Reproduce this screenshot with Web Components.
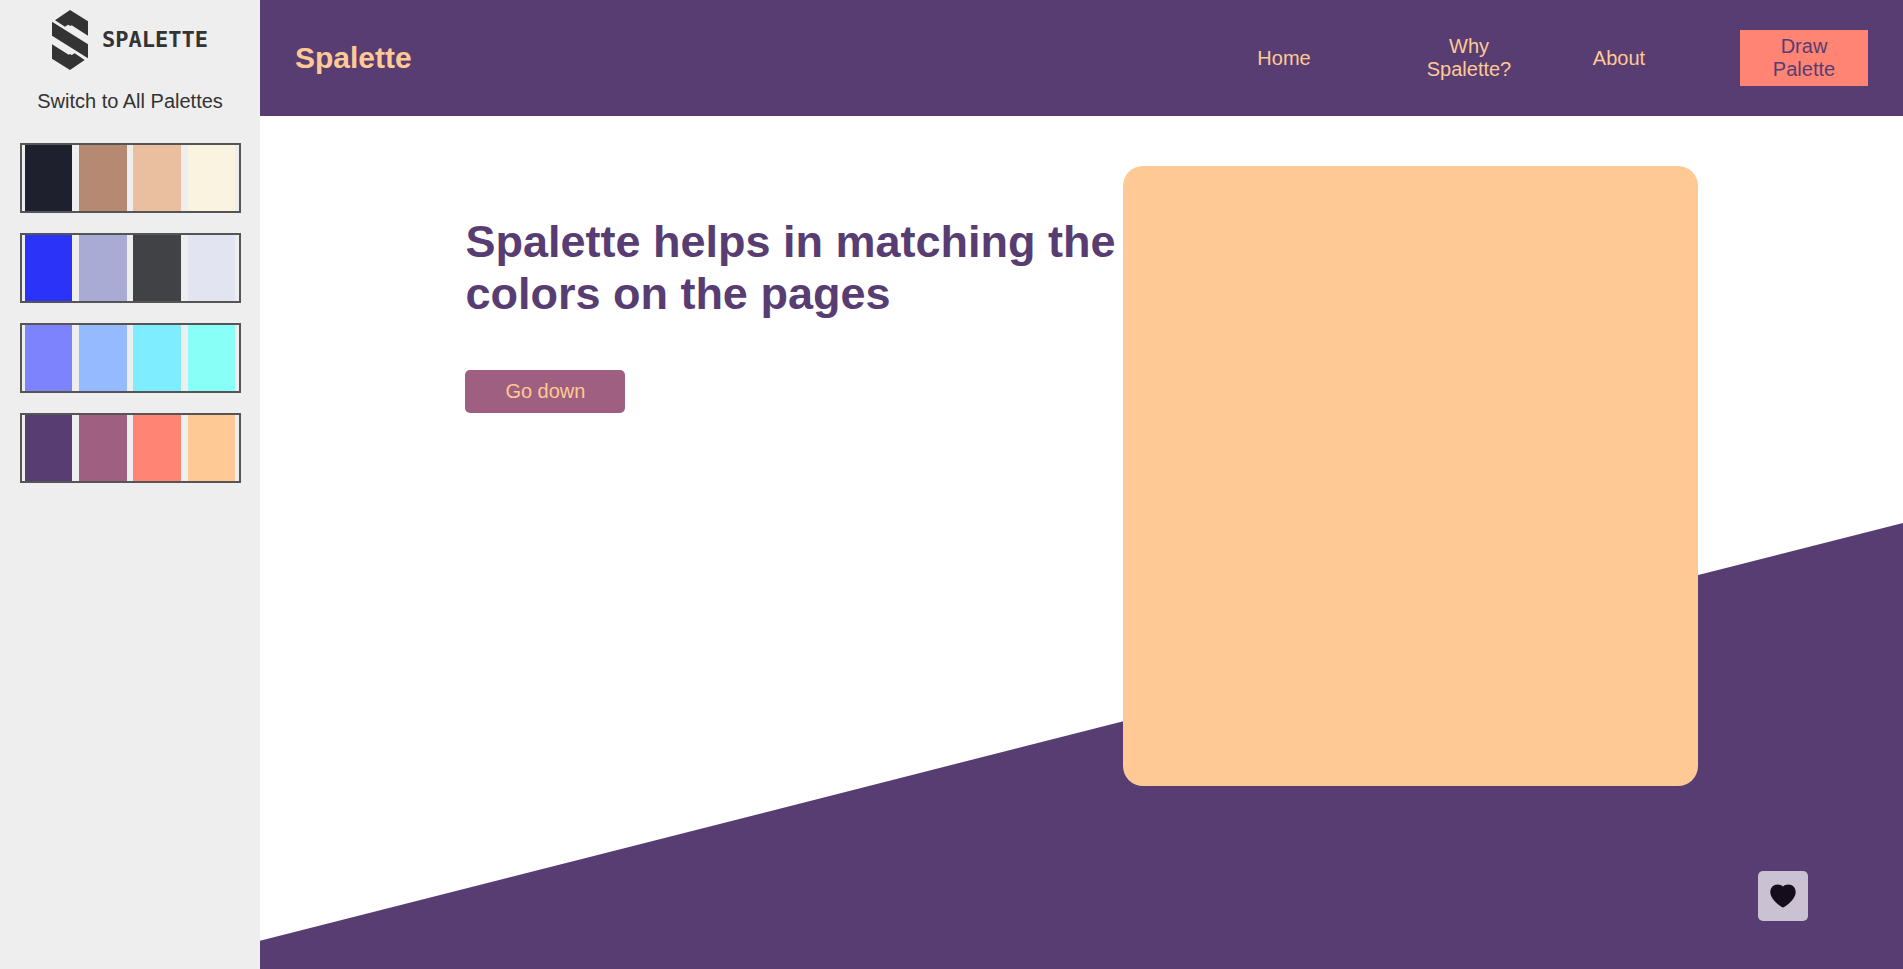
<!DOCTYPE html>
<html lang="en">
<head>
<meta charset="UTF-8">
<meta name="viewport" content="width=device-width, initial-scale=1.0">
<title>Spalette</title>
<style>
  *{
    box-sizing:border-box;
  }
  :root{
    --first:#583d72;
    --second:#9f5f80;
    --third:#ff8474;
    --fourth:#ffc996;
  }
  body{
    margin:0;
    min-height:100vh;
    display:flex;
    font-family:"Liberation Sans",Arial,sans-serif;
    font-size:20px;
  }
  main{
    flex:1;
    display:flex;
    flex-direction:column;
  }
</style>
</head>
<body>
  <palette-sidebar>
    <spalette-logo slot="logo">SPALETTE</spalette-logo>
    <span slot="switch">Switch to All Palettes</span>
    <color-palette colors="#1e212d,#b68973,#eabf9f,#faf3e0"></color-palette>
    <color-palette colors="#2b33f9,#a9abd5,#414246,#e2e5f1"></color-palette>
    <color-palette colors="#7c83fd,#96baff,#7dedff,#88fff7"></color-palette>
    <color-palette colors="#583d72,#9f5f80,#ff8474,#ffc996"></color-palette>
  </palette-sidebar>
  <main>
    <page-header>Spalette</page-header>
    <page-hero>
      <span slot="title">Spalette helps in matching the colors on the pages</span>
      <span slot="action">Go down</span>
    </page-hero>
  </main>
  <favorite-button></favorite-button>

<script>
class SpaletteElement extends HTMLElement{
    constructor(){
        super();
        this.attachShadow({mode:'open'});
    }

    connectedCallback(){
        this.render();
    }

    render(){
        const template=document.createElement('template');
        template.innerHTML=`
          <style>
          *{
            box-sizing:border-box;
          }
          button{
            border:0;
            padding:0;
            font:inherit;
            color:inherit;
            background:none;
            cursor:pointer;
          }
          ${this.getStyles()}
          </style>
          ${this.getTemplate()}
        `;
        this.shadowRoot.replaceChildren(template.content.cloneNode(true));
    }
}

class SpaletteLogo extends SpaletteElement{
    getTemplate(){
        return `
          <svg viewBox="156 30 108 180" width="36" height="60" aria-hidden="true">
            <path d="M210 30 264 64V107L215 76 211 78 204 74 195 80 165 61Z"/>
            <path d="M156 65 264 133V175L156 107Z"/>
            <path d="M156 133 206 164 209 162 215 165 224 160 254 180 210 210 156 176Z"/>
          </svg>
          <slot></slot>
        `;
    }
    getStyles(){
        return `
          :host{
            display:flex;
            align-items:center;
            justify-content:center;
            gap:14px;
            color:#333;
            font-family:"DejaVu Sans Mono",monospace;
            font-size:22px;
            font-weight:bold;
            line-height:26px;
          }
          svg{
            fill:currentColor;
          }
        `;
    }
}

class ColorPalette extends SpaletteElement{
    getTemplate(){
        const colors=this.getAttribute('colors').split(',');
        return `
          <button type="button" aria-label="Use palette ${colors.join(' ')}">
            ${colors.map(color=>`<span style="background:${color}"></span>`).join('')}
          </button>
        `;
    }
    getStyles(){
        return `
          :host{
            display:block;
          }
          button{
            display:flex;
            justify-content:space-around;
            width:100%;
            height:70px;
            border:2px solid #555;
          }
          span{
            width:22%;
            height:100%;
          }
        `;
    }
}

class PaletteSidebar extends SpaletteElement{
    getTemplate(){
        return `
          <slot name="logo"></slot>
          <button type="button"><slot name="switch"></slot></button>
          <div><slot></slot></div>
        `;
    }
    getStyles(){
        return `
          :host{
            display:flex;
            flex-direction:column;
            align-items:center;
            flex:none;
            width:260px;
            padding:10px 0;
            background:#eee;
            color:#333;
          }
          button{
            margin:20px 0 30px;
            line-height:23px;
          }
          div{
            display:flex;
            flex-direction:column;
            gap:20px;
            width:85%;
          }
        `;
    }
}

class PageHeader extends SpaletteElement{
    getTemplate(){
        return `
          <h1><slot></slot></h1>
          <nav>
            <div>
              <a href="#home">Home</a>
              <a href="#why">Why Spalette?</a>
            </div>
            <div>
              <a href="#about">About</a>
              <a href="#draw" class="draw">Draw Palette</a>
            </div>
          </nav>
        `;
    }
    getStyles(){
        return `
          :host{
            display:flex;
            align-items:center;
            justify-content:space-between;
            padding:30px 35px;
            background:var(--first);
            color:var(--fourth);
          }
          h1{
            margin:0;
            font-size:30px;
            line-height:34px;
          }
          nav{
            display:flex;
            gap:22px;
          }
          div{
            display:flex;
            align-items:center;
            gap:57px;
          }
          a{
            width:128px;
            padding:5px 20px;
            color:inherit;
            text-align:center;
            text-decoration:none;
            line-height:23px;
          }
          .draw{
            background:var(--third);
            color:var(--first);
          }
        `;
    }
}

class PageHero extends SpaletteElement{
    getTemplate(){
        return `
          <div class="slope"></div>
          <section>
            <div class="text">
              <h2><slot name="title"></slot></h2>
              <button type="button"><slot name="action"></slot></button>
            </div>
            <div class="card"></div>
          </section>
        `;
    }
    getStyles(){
        return `
          :host{
            display:grid;
            flex:1;
            background:#fff;
          }
          .slope,section{
            grid-area:1/1;
          }
          .slope{
            background:var(--first);
            clip-path:polygon(0 96.7%,100% 47.7%,100% 100%,0 100%);
          }
          section{
            z-index:1;
            display:flex;
            align-items:flex-start;
            padding:50px 12.5%;
          }
          .text{
            flex:1;
            padding-top:50px;
          }
          h2{
            margin:0 0 50px;
            color:var(--first);
            font-size:45px;
            line-height:52px;
          }
          button{
            padding:10px 40px;
            border-radius:5px;
            background:var(--second);
            color:var(--fourth);
            line-height:23px;
          }
          .card{
            width:46.6%;
            height:620px;
            border-radius:20px;
            background:var(--fourth);
          }
        `;
    }
}

class FavoriteButton extends SpaletteElement{
    getTemplate(){
        return `
          <button type="button" aria-label="Favorite">
            <svg viewBox="0 0 26 24" width="26" height="24" aria-hidden="true">
              <path d="M13 23.500C10.500 22.500 .3 15.500 .3 8.200 .3 3.500 3.600 .6 7.500 .6 9.800 .6 11.900 1.400 13 2.600 14.100 1.400 16.200 .6 18.500 .6 22.400 .6 25.700 3.500 25.700 8.200 25.700 15.500 15.500 22.500 13 23.500Z"/>
            </svg>
          </button>
        `;
    }
    getStyles(){
        return `
          :host{
            position:fixed;
            right:5%;
            bottom:5%;
            z-index:2;
          }
          button{
            display:flex;
            align-items:center;
            justify-content:center;
            width:50px;
            height:50px;
            border-radius:5px;
            background:#cac2d2;
          }
          svg{
            fill:#140e1c;
          }
        `;
    }
}

customElements.define('spalette-logo',SpaletteLogo);
customElements.define('color-palette',ColorPalette);
customElements.define('palette-sidebar',PaletteSidebar);
customElements.define('page-header',PageHeader);
customElements.define('page-hero',PageHero);
customElements.define('favorite-button',FavoriteButton);
</script>
</body>
</html>
